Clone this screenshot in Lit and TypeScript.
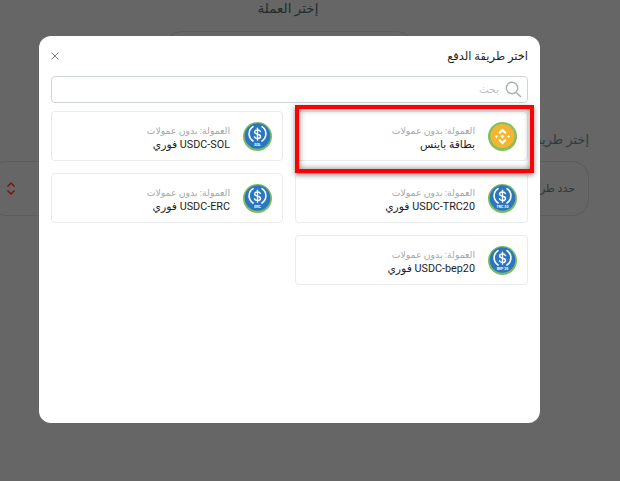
import { LitElement, html, css, svg, unsafeCSS } from "lit";
import { customElement } from "lit/decorators.js";

const FONT = unsafeCSS(`"Roboto", "DejaVu Sans", sans-serif`);

const methods = [
  { name: "بطاقة باينس", kind: "bnb", tag: "" },
  { name: "USDC-SOL فوري", kind: "usdc", tag: "SOL" },
  { name: "USDC-TRC20 فوري", kind: "usdc", tag: "TRC 20" },
  { name: "USDC-ERC فوري", kind: "usdc", tag: "ERC" },
  { name: "USDC-bep20 فوري", kind: "usdc", tag: "BEP 20" },
];

const bnbIcon = svg`<svg class="coin" viewBox="0 0 29 29">
  <circle cx="14.5" cy="14.5" r="14.5" fill="#86bf62"/>
  <circle cx="14.5" cy="14" r="12" fill="#f5b62f"/>
  <g fill="#fff">
    <path d="M14.5 6.6l4 4-1.5 1.5-2.5-2.5-2.5 2.5-1.5-1.5z"/>
    <path d="M14.5 22.4l4-4-1.5-1.5-2.5 2.5-2.5-2.5-1.5 1.5z"/>
    <path d="M14.5 12.5l2 2-2 2-2-2z"/>
    <path d="M8.4 12.9l1.6 1.6-1.6 1.6-1.6-1.6z"/>
    <path d="M20.6 12.9l1.6 1.6-1.6 1.6-1.6-1.6z"/>
  </g>
</svg>`;

const usdcIcon = (tag: string) => svg`<svg class="coin" viewBox="0 0 29 29">
  <circle cx="14.5" cy="14.5" r="14.5" fill="#7cbb62"/>
  <circle cx="14.5" cy="14" r="12.8" fill="#2a77bf"/>
  <g fill="none" stroke="#fff" stroke-width="1.6" stroke-linecap="round">
    <path d="M10 4.6a8.6 8.6 0 0 0 0 14.4"/>
    <path d="M19 4.6a8.6 8.6 0 0 1 0 14.4"/>
    <path d="M17.4 9.6c-.4-1.1-1.5-1.6-2.9-1.6-1.7 0-2.9.8-2.9 2.1 0 3 5.9 1.4 5.9 4.3 0 1.4-1.3 2.1-3 2.1-1.5 0-2.6-.6-3-1.7" stroke-width="1.4"/>
    <path d="M14.5 6.2v12" stroke-width="1.3"/>
  </g>
  <text class="tag" x="14.5" y="24.4" text-anchor="middle">${tag}</text>
</svg>`;

@customElement("app-root")
export class AppRoot extends LitElement {
  static styles = css`
    :host {
      display: block;
      width: 620px;
      height: 481px;
      overflow: hidden;
      position: relative;
      font-family: ${FONT};
      background: #656665;
    }
    .page {
      direction: rtl;
      display: flex;
      flex-direction: column;
      height: 481px;
      color: #262b2b;
    }
    .page h2 {
      margin: 0 44px 0 0;
      font-size: 13.5px;
      line-height: 16px;
      font-weight: 400;
      text-align: center;
      width: 576px;
    }
    .ghost-top {
      width: 248px;
      height: 60px;
      margin: 15px 207px 0 0;
      border: 1px solid #5b5c5b;
      border-radius: 16px;
      box-sizing: border-box;
      flex: none;
    }
    .page h3 {
      margin: 41px 31px 0 0;
      font-size: 13px;
      line-height: 16px;
      font-weight: 400;
      color: #2f3a3f;
    }
    .ghost-select {
      width: 600px;
      height: 55px;
      box-sizing: border-box;
      margin: 13px 31px 0 0;
      padding: 0 13px 0 16px;
      border: 1px solid #5b5c5b;
      border-radius: 16px;
      display: flex;
      align-items: center;
      justify-content: space-between;
      font-size: 11px;
      color: #333;
      flex: none;
    }
    .chev {
      width: 10px;
      height: 15px;
      display: block;
    }
    .modal {
      position: absolute;
      left: 39px;
      top: 36px;
      width: 501px;
      height: 387px;
      box-sizing: border-box;
      padding: 0 12px;
      background: #fff;
      border-radius: 12px;
      direction: rtl;
      display: flex;
      flex-direction: column;
    }
    .head {
      height: 40px;
      display: flex;
      align-items: center;
      justify-content: space-between;
      font-size: 11.5px;
      color: #1f1f1f;
    }
    .close {
      width: 8px;
      height: 8px;
      display: block;
    }
    .search {
      height: 27px;
      box-sizing: border-box;
      border: 1px solid #cfd4d8;
      border-radius: 4px;
      display: flex;
      align-items: center;
      gap: 6px;
      padding: 0 5px;
      font-size: 10.5px;
      color: #bcc0c3;
    }
    .search svg {
      width: 17px;
      height: 17px;
      display: block;
    }
    .grid {
      margin-top: 8px;
      display: grid;
      grid-template-columns: 233px 232px;
      justify-content: space-between;
      grid-auto-rows: 50px;
      row-gap: 12px;
    }
    .card {
      box-sizing: border-box;
      border: 1px solid #e9ebed;
      border-radius: 4px;
      display: flex;
      align-items: center;
      gap: 13px;
      padding: 0 10px;
    }
    .coin {
      width: 29px;
      height: 29px;
      flex: none;
      display: block;
    }
    .tag {
      font-size: 3.6px;
      font-weight: 700;
      fill: #fff;
    }
    .info {
      display: flex;
      flex-direction: column;
      gap: 1px;
      padding-top: 4px;
    }
    .fee {
      font-size: 9.3px;
      line-height: 13px;
      color: #a3a7ab;
    }
    .name {
      font-size: 10.8px;
      line-height: 14px;
      color: #1c1c1c;
    }
    .mark {
      position: absolute;
      left: 295px;
      top: 105px;
      width: 239px;
      height: 68px;
      box-sizing: border-box;
      border: 4px solid #ff0000;
      box-shadow: 0 2px 5px rgba(0, 0, 0, 0.45), inset 0 0 6px rgba(0, 0, 0, 0.5);
      pointer-events: none;
    }
  `;

  render() {
    return html`
      <div class="page">
        <h2>إختر العملة</h2>
        <div class="ghost-top"></div>
        <h3>إختر طريقة الدفع</h3>
        <div class="ghost-select">
          <span>حدد طريقة الدفع</span>
          <svg class="chev" viewBox="0 0 10 15" fill="none" stroke="#7e1010" stroke-width="1.5">
            <path d="M1.5 5.5L5 2l3.5 3.5"/>
            <path d="M1.5 9.5L5 13l3.5-3.5"/>
          </svg>
        </div>
      </div>
      <div class="modal">
        <div class="head">
          <span>اختر طريقة الدفع</span>
          <svg class="close" viewBox="0 0 8 8" stroke="#7d8388" stroke-width="1" fill="none">
            <path d="M.5.5l7 7M7.5.5l-7 7"/>
          </svg>
        </div>
        <div class="search">
          <svg viewBox="0 0 16 16" fill="none" stroke="#a9aeb2" stroke-width="1.3">
            <circle cx="6.6" cy="6.6" r="5.4"/>
            <path d="M10.5 10.5l4.5 4.5"/>
          </svg>
          <span>بحث</span>
        </div>
        <div class="grid">
          ${methods.map(
            (m) => html`<div class="card">
              ${m.kind === "bnb" ? bnbIcon : usdcIcon(m.tag)}
              <div class="info">
                <span class="fee">العمولة: بدون عمولات</span>
                <span class="name">${m.name}</span>
              </div>
            </div>`
          )}
        </div>
      </div>
      <div class="mark"></div>
    `;
  }
}
